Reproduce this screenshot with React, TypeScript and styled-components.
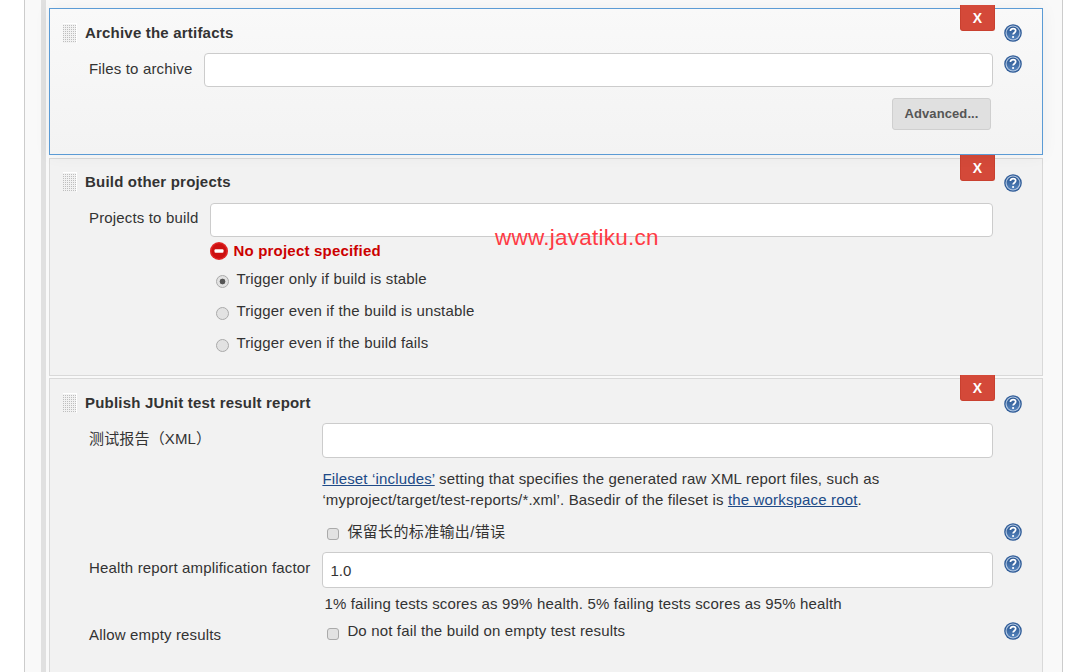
import React from "react";
import styled, { createGlobalStyle } from "styled-components";

const Global = createGlobalStyle`
  html, body { margin: 0; padding: 0; background: #fff; height: 100%; overflow: hidden; }
  body { font-family: "Liberation Sans", "Noto Sans CJK SC", Arial, sans-serif; font-size: 15px; letter-spacing: 0.16px; color: #333; }
`;

const Page = styled.div`
  position: relative;
  width: 1086px;
  height: 672px;
  overflow: hidden;
  padding-left: 24px;
  box-sizing: border-box;
`;
const Frame = styled.div`
  width: 1039px;
  height: 672px;
  box-sizing: border-box;
  background: #f9f9f9;
  border-left: 1px solid #ccc;
  border-right: 1px solid #ccc;
  padding: 0 0 0 16px;
`;
const Chunk = styled.div`
  border-left: 5px solid #e0e0e0;
  padding: 8px 0 0 3px;
  width: 1002px;
  box-sizing: border-box;
  height: 672px;
  display: flex;
  flex-direction: column;
  gap: 3px;
`;
const Card = styled.section<{ $active?: boolean; $h: number; $pt?: number; $mt?: number }>`
  position: relative;
  box-sizing: border-box;
  width: 994px;
  height: ${(p) => p.$h}px;
  flex: none;
  margin-top: ${(p) => p.$mt ?? 0}px;
  padding: ${(p) => p.$pt ?? 14}px 49px 0 0;
  border: 1px solid ${(p) => (p.$active ? "#5b9bd5" : "#d9d9d9")};
  background: ${(p) => (p.$active ? "linear-gradient(#f9f9f9, #f3f3f3)" : "#f2f2f2")};
  box-shadow: ${(p) => (p.$active ? "0 0 16px rgba(0,0,0,0.05)" : "none")};
  z-index: ${(p) => (p.$active ? 1 : 0)};
`;
const Del = styled.button`
  position: absolute;
  top: -4px;
  right: 47px;
  width: 35px;
  height: 26px;
  padding: 0;
  border: 1px solid #c9402f;
  border-top: none;
  border-radius: 0 0 3px 3px;
  background: #d44939;
  color: #fff;
  font: bold 14px "Liberation Sans", sans-serif;
  line-height: 24px;
  z-index: 2;
`;
const HeadRow = styled.div`
  position: relative;
  display: flex;
  align-items: center;
  height: 20px;
  padding-left: 13px;
`;
const Title = styled.h3`
  margin: -2px 0 0 8px;
  font-size: 15px;
  font-weight: bold;
  letter-spacing: 0.2px;
  color: #333;
`;
const Form = styled.div<{ $mt?: number }>`
  display: grid;
  grid-template-columns: max-content 1fr;
  column-gap: 12px;
  padding-left: 39px;
  margin-top: ${(p) => p.$mt ?? 10}px;
  align-items: start;
`;
const Label = styled.label<{ $top?: number; $mt?: number }>`
  line-height: 20px;
  margin-top: ${(p) => p.$mt ?? 0}px;
  padding-top: ${(p) => p.$top ?? 6}px;
  color: #333;
`;
const Field = styled.div<{ $mt?: number }>`
  position: relative;
  min-width: 0;
  margin-top: ${(p) => p.$mt ?? 0}px;
`;
const TextInput = styled.input<{ $h?: number }>`
  display: block;
  box-sizing: border-box;
  width: 100%;
  height: ${(p) => p.$h ?? 35}px;
  border: 1px solid #ccc;
  border-radius: 4px;
  background: #fff;
  padding: 0 7px;
  font: 15px "Liberation Sans", sans-serif;
  color: #333;
  outline: none;
`;
const HelpSlot = styled.span<{ $top?: number }>`
  position: absolute;
  left: calc(100% + 11px);
  top: ${(p) => p.$top ?? 2}px;
  width: 18px;
  height: 18px;
  display: block;
`;
const HeadHelp = styled.span<{ $top?: number }>`
  position: absolute;
  left: 954px;
  top: ${(p) => p.$top ?? 1}px;
  width: 18px;
  height: 18px;
`;
const BtnRow = styled.div`
  display: flex;
  justify-content: flex-end;
  padding-right: 2px;
  margin-top: 11px;
`;
const AdvBtn = styled.button`
  width: 99px;
  height: 32px;
  padding: 0 0 2px;
  border: 1px solid #cfcfcf;
  border-radius: 3px;
  background: #e0e0e0;
  color: #555;
  font: bold 13px "Liberation Sans", sans-serif;
  letter-spacing: 0.1px;
`;
const Err = styled.div`
  display: flex;
  align-items: center;
  gap: 5px;
  height: 18px;
  margin-top: 5px;
  color: #cc0000;
  font-weight: bold;
  letter-spacing: 0.2px;
`;
const ErrText = styled.span`
  margin-top: -2px;
`;
const Options = styled.div`
  margin-top: 2px;
  display: flex;
  flex-direction: column;
`;
const Option = styled.label`
  display: flex;
  align-items: center;
  height: 32px;
  padding-left: 6px;
  gap: 7px;
  color: #333;
`;
const Radio = styled.input.attrs({ type: "radio" })`
  appearance: none;
  margin: 6px 0 0 0;
  width: 13px;
  height: 13px;
  box-sizing: border-box;
  border: 1px solid #aaa;
  border-radius: 50%;
  background: #e2e2e2;
  flex: none;
  &:checked {
    background: radial-gradient(circle, #555 0 2.6px, #e2e2e2 3.2px);
  }
`;
const Check = styled.input.attrs({ type: "checkbox" })`
  appearance: none;
  margin: 7px 0 0 0;
  width: 12px;
  height: 12px;
  box-sizing: border-box;
  border: 1px solid #aaa;
  border-radius: 3px;
  background: #e2e2e2;
  flex: none;
`;
const Desc = styled.p`
  margin: 10px 0 0;
  line-height: 21px;
  color: #333;
  a { color: #204a87; text-decoration: underline; }
`;
const CheckRow = styled.label<{ $mt: number; $ls?: number }>`
  position: relative;
  display: flex;
  align-items: center;
  gap: 8px;
  padding-left: 5px;
  height: 20px;
  margin-top: ${(p) => p.$mt}px;
  letter-spacing: ${(p) => p.$ls ?? 0.16}px;
  color: #333;
`;
const Hint = styled.div`
  margin-top: 6px;
  padding-left: 2px;
  line-height: 20px;
  color: #333;
`;
const Stamp = styled.div`
  position: absolute;
  left: 495px;
  top: 225px;
  font-size: 22.5px;
  letter-spacing: 0.25px;
  line-height: 26px;
  color: #ff3a44;
  pointer-events: none;
  z-index: 3;
`;

const Grip = () => (
  <svg width="14" height="20" viewBox="0 0 14 20">
    <defs>
      <pattern id="g" width="2" height="2" patternUnits="userSpaceOnUse">
        <rect width="2" height="2" fill="#f2f2f2" />
        <rect width="1" height="1" fill="#bebebe" />
      </pattern>
    </defs>
    <rect width="14" height="20" fill="#fff" />
    <rect x="0" y="1" width="13" height="19" fill="url(#g)" />
  </svg>
);

const Help = () => (
  <svg width="18" height="18" viewBox="0 0 18 18">
    <defs>
      <linearGradient id="hb" x1="0" y1="0" x2="0" y2="1">
        <stop offset="0" stopColor="#28548f" />
        <stop offset="1" stopColor="#5584bd" />
      </linearGradient>
    </defs>
    <circle cx="9" cy="9" r="8.8" fill="#2f5c98" />
    <circle cx="9" cy="9" r="7.5" fill="#b4c8e2" />
    <circle cx="9" cy="9" r="6.4" fill="url(#hb)" />
    <path d="M6.4 7.1c0-1.6 1.2-2.5 2.7-2.5s2.6.9 2.6 2.2c0 1.9-2.6 1.9-2.6 3.8" fill="none" stroke="#fff" strokeWidth="1.7" />
    <circle cx="9.1" cy="13" r="1.1" fill="#fff" />
  </svg>
);

const Stop = () => (
  <svg width="18" height="18" viewBox="0 0 18 18">
    <circle cx="9" cy="9" r="9" fill="#e02424" />
    <circle cx="9" cy="9" r="7.4" fill="#cc1010" />
    <rect x="4.5" y="7.2" width="9" height="3.6" rx="1" fill="#fff" />
  </svg>
);

export default function App() {
  return (
    <Page>
      <Global />
      <Frame>
        <Chunk>
          <Card $active $h={147}>
            <Del>X</Del>
            <HeadRow>
              <Grip />
              <Title>Archive the artifacts</Title>
              <HeadHelp><Help /></HeadHelp>
            </HeadRow>
            <Form>
              <Label>Files to archive</Label>
              <Field>
                <TextInput $h={34} />
                <HelpSlot><Help /></HelpSlot>
                <BtnRow><AdvBtn>Advanced...</AdvBtn></BtnRow>
              </Field>
            </Form>
          </Card>
          <Card $h={218} $pt={13}>
            <Del>X</Del>
            <HeadRow>
              <Grip />
              <Title>Build other projects</Title>
              <HeadHelp $top={2}><Help /></HeadHelp>
            </HeadRow>
            <Form $mt={11}>
              <Label $top={5}>Projects to build</Label>
              <Field>
                <TextInput $h={34} />
                <Err><Stop /><ErrText>No project specified</ErrText></Err>
                <Options>
                  <Option><Radio name="t" defaultChecked />Trigger only if build is stable</Option>
                  <Option><Radio name="t" />Trigger even if the build is unstable</Option>
                  <Option><Radio name="t" />Trigger even if the build fails</Option>
                </Options>
              </Field>
            </Form>
          </Card>
          <Card $h={310} $mt={-1}>
            <Del>X</Del>
            <HeadRow>
              <Grip />
              <Title>Publish JUnit test result report</Title>
              <HeadHelp $top={2}><Help /></HeadHelp>
            </HeadRow>
            <Form>
              <Label $top={6}>测试报告（XML）</Label>
              <Field>
                <TextInput />
                <Desc>
                  <a href="#f">Fileset ‘includes’</a> setting that specifies the generated raw XML report files, such as<br />
                  ‘myproject/target/test-reports/*.xml’. Basedir of the fileset is <a href="#w">the workspace root</a>.
                </Desc>
                <CheckRow $mt={10} $ls={0.35}>
                  <Check />保留长的标准输出/错误
                  <HelpSlot $top={3}><Help /></HelpSlot>
                </CheckRow>
              </Field>
              <Label $top={6} $mt={12}>Health report amplification factor</Label>
              <Field $mt={12}>
                <TextInput $h={36} defaultValue="1.0" />
                <HelpSlot $top={3}><Help /></HelpSlot>
                <Hint>1% failing tests scores as 99% health. 5% failing tests scores as 95% health</Hint>
              </Field>
              <Label $top={1} $mt={10}>Allow empty results</Label>
              <Field $mt={6}>
                <CheckRow $mt={0}>
                  <Check />Do not fail the build on empty test results
                  <HelpSlot $top={2}><Help /></HelpSlot>
                </CheckRow>
              </Field>
            </Form>
          </Card>
        </Chunk>
      </Frame>
      <Stamp>www.javatiku.cn</Stamp>
    </Page>
  );
}
